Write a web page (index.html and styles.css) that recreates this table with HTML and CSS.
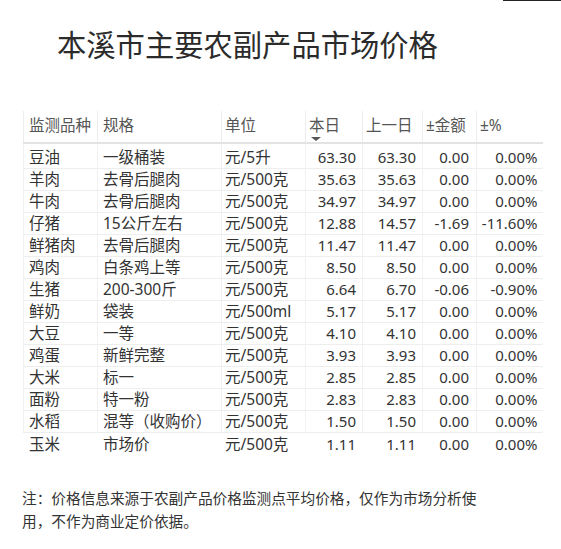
FILE: index.html
```html
<!DOCTYPE html>
<html lang="zh-CN">
<head>
<meta charset="utf-8">
<title>本溪市主要农副产品市场价格</title>
<link rel="stylesheet" href="styles.css">
</head>
<body>
<div class="topline"></div>
<div class="page">
  <h1 class="title">本溪市主要农副产品市场价格</h1>
  <table class="prices">
    <colgroup>
      <col class="c1"><col class="c2"><col class="c3"><col class="c4"><col class="c5"><col class="c6"><col class="c7">
    </colgroup>
    <thead>
      <tr>
        <th class="p1">监测品种</th>
        <th class="p2">规格</th>
        <th class="p3">单位</th>
        <th class="p3">本日<span class="sort"></span></th>
        <th class="p3">上一日</th>
        <th class="p3">±金额</th>
        <th class="p3">±%</th>
      </tr>
    </thead>
    <tbody>
      <tr><td class="p1">豆油</td><td class="p2">一级桶装</td><td class="p3">元/5升</td><td class="n">63.30</td><td class="n">63.30</td><td class="n n6">0.00</td><td class="n n7">0.00%</td></tr>
      <tr><td class="p1">羊肉</td><td class="p2">去骨后腿肉</td><td class="p3">元/500克</td><td class="n">35.63</td><td class="n">35.63</td><td class="n n6">0.00</td><td class="n n7">0.00%</td></tr>
      <tr><td class="p1">牛肉</td><td class="p2">去骨后腿肉</td><td class="p3">元/500克</td><td class="n">34.97</td><td class="n">34.97</td><td class="n n6">0.00</td><td class="n n7">0.00%</td></tr>
      <tr><td class="p1">仔猪</td><td class="p2">15公斤左右</td><td class="p3">元/500克</td><td class="n">12.88</td><td class="n">14.57</td><td class="n n6">-1.69</td><td class="n n7">-11.60%</td></tr>
      <tr><td class="p1">鲜猪肉</td><td class="p2">去骨后腿肉</td><td class="p3">元/500克</td><td class="n">11.47</td><td class="n">11.47</td><td class="n n6">0.00</td><td class="n n7">0.00%</td></tr>
      <tr><td class="p1">鸡肉</td><td class="p2">白条鸡上等</td><td class="p3">元/500克</td><td class="n">8.50</td><td class="n">8.50</td><td class="n n6">0.00</td><td class="n n7">0.00%</td></tr>
      <tr><td class="p1">生猪</td><td class="p2">200-300斤</td><td class="p3">元/500克</td><td class="n">6.64</td><td class="n">6.70</td><td class="n n6">-0.06</td><td class="n n7">-0.90%</td></tr>
      <tr><td class="p1">鲜奶</td><td class="p2">袋装</td><td class="p3">元/500ml</td><td class="n">5.17</td><td class="n">5.17</td><td class="n n6">0.00</td><td class="n n7">0.00%</td></tr>
      <tr><td class="p1">大豆</td><td class="p2">一等</td><td class="p3">元/500克</td><td class="n">4.10</td><td class="n">4.10</td><td class="n n6">0.00</td><td class="n n7">0.00%</td></tr>
      <tr><td class="p1">鸡蛋</td><td class="p2">新鲜完整</td><td class="p3">元/500克</td><td class="n">3.93</td><td class="n">3.93</td><td class="n n6">0.00</td><td class="n n7">0.00%</td></tr>
      <tr><td class="p1">大米</td><td class="p2">标一</td><td class="p3">元/500克</td><td class="n">2.85</td><td class="n">2.85</td><td class="n n6">0.00</td><td class="n n7">0.00%</td></tr>
      <tr><td class="p1">面粉</td><td class="p2">特一粉</td><td class="p3">元/500克</td><td class="n">2.83</td><td class="n">2.83</td><td class="n n6">0.00</td><td class="n n7">0.00%</td></tr>
      <tr><td class="p1">水稻</td><td class="p2">混等（收购价）</td><td class="p3">元/500克</td><td class="n">1.50</td><td class="n">1.50</td><td class="n n6">0.00</td><td class="n n7">0.00%</td></tr>
      <tr class="last"><td class="p1">玉米</td><td class="p2">市场价</td><td class="p3">元/500克</td><td class="n">1.11</td><td class="n">1.11</td><td class="n n6">0.00</td><td class="n n7">0.00%</td></tr>
    </tbody>
  </table>
  <p class="note">注：价格信息来源于农副产品价格监测点平均价格，仅作为市场分析使用，不作为商业定价依据。</p>
</div>
</body>
</html>
```

FILE: styles.css
```css
html, body {
  margin: 0;
  padding: 0;
  background: #ffffff;
}

body {
  font-family: "Noto Sans", "Noto Sans CJK SC", sans-serif;
  color: #333333;
  position: relative;
  width: 561px;
  height: 549px;
  overflow: hidden;
}

.topline {
  position: absolute;
  top: 0;
  left: 503px;
  width: 58px;
  height: 1px;
  background: #222222;
}

.page {
  display: flex;
  flex-direction: column;
}

.title {
  margin: 26px 0 0 57px;
  font-family: "Noto Sans CJK SC", sans-serif;
  font-weight: 400;
  font-size: 29.3px;
  line-height: 34px;
  color: #2b2b2b;
}

.prices {
  margin: 51px 0 0 23px;
  border-collapse: collapse;
  table-layout: fixed;
  width: 519px;
  font-size: 15px;
}

.c1 { width: 74px; }
.c2 { width: 124px; }
.c3 { width: 84px; }
.c4 { width: 57px; }
.c5 { width: 60px; }
.c6 { width: 54px; }
.c7 { width: 66px; }

.prices th {
  font-weight: 400;
  font-size: 15.5px;
  color: #555555;
  height: 32px;
  padding: 4px 0 0 0;
  vertical-align: top;
  text-align: left;
  line-height: 20px;
  border-left: 1px solid #ededed;
  border-bottom: 2px solid #e3e3e3;
  white-space: nowrap;
  box-sizing: border-box;
}

.prices td {
  height: 22px;
  padding: 0;
  line-height: 21px;
  border-left: 1px solid #f1f1f1;
  border-bottom: 1px solid #eeeeee;
  white-space: nowrap;
  box-sizing: border-box;
  color: #333333;
}

.prices td.p1,
.prices td.p2,
.prices td.p3 {
  font-size: 15.5px;
}

.prices tbody tr:first-child td {
  height: 25px;
  padding-top: 3px;
}

.prices tr.last td {
  height: 23px;
  border-bottom: none;
  border-left-color: transparent;
}

.p1 { padding-left: 5px !important; }
.p2 { padding-left: 5px !important; }
.p3 { padding-left: 3px !important; }

.n {
  text-align: right;
  padding-right: 6px !important;
  color: #444444;
}

.n6 { padding-right: 7px !important; }
.n7 { padding-right: 5px !important; }

.sort {
  display: block;
  width: 0;
  height: 0;
  margin: 2px 0 0 2px;
  border-left: 5px solid transparent;
  border-right: 5px solid transparent;
  border-top: 4px solid #555555;
}

.note {
  margin: 30px 0 0 22px;
  width: 462px;
  font-family: "Noto Sans CJK SC", sans-serif;
  font-size: 14.67px;
  line-height: 23px;
  color: #333333;
}
```
